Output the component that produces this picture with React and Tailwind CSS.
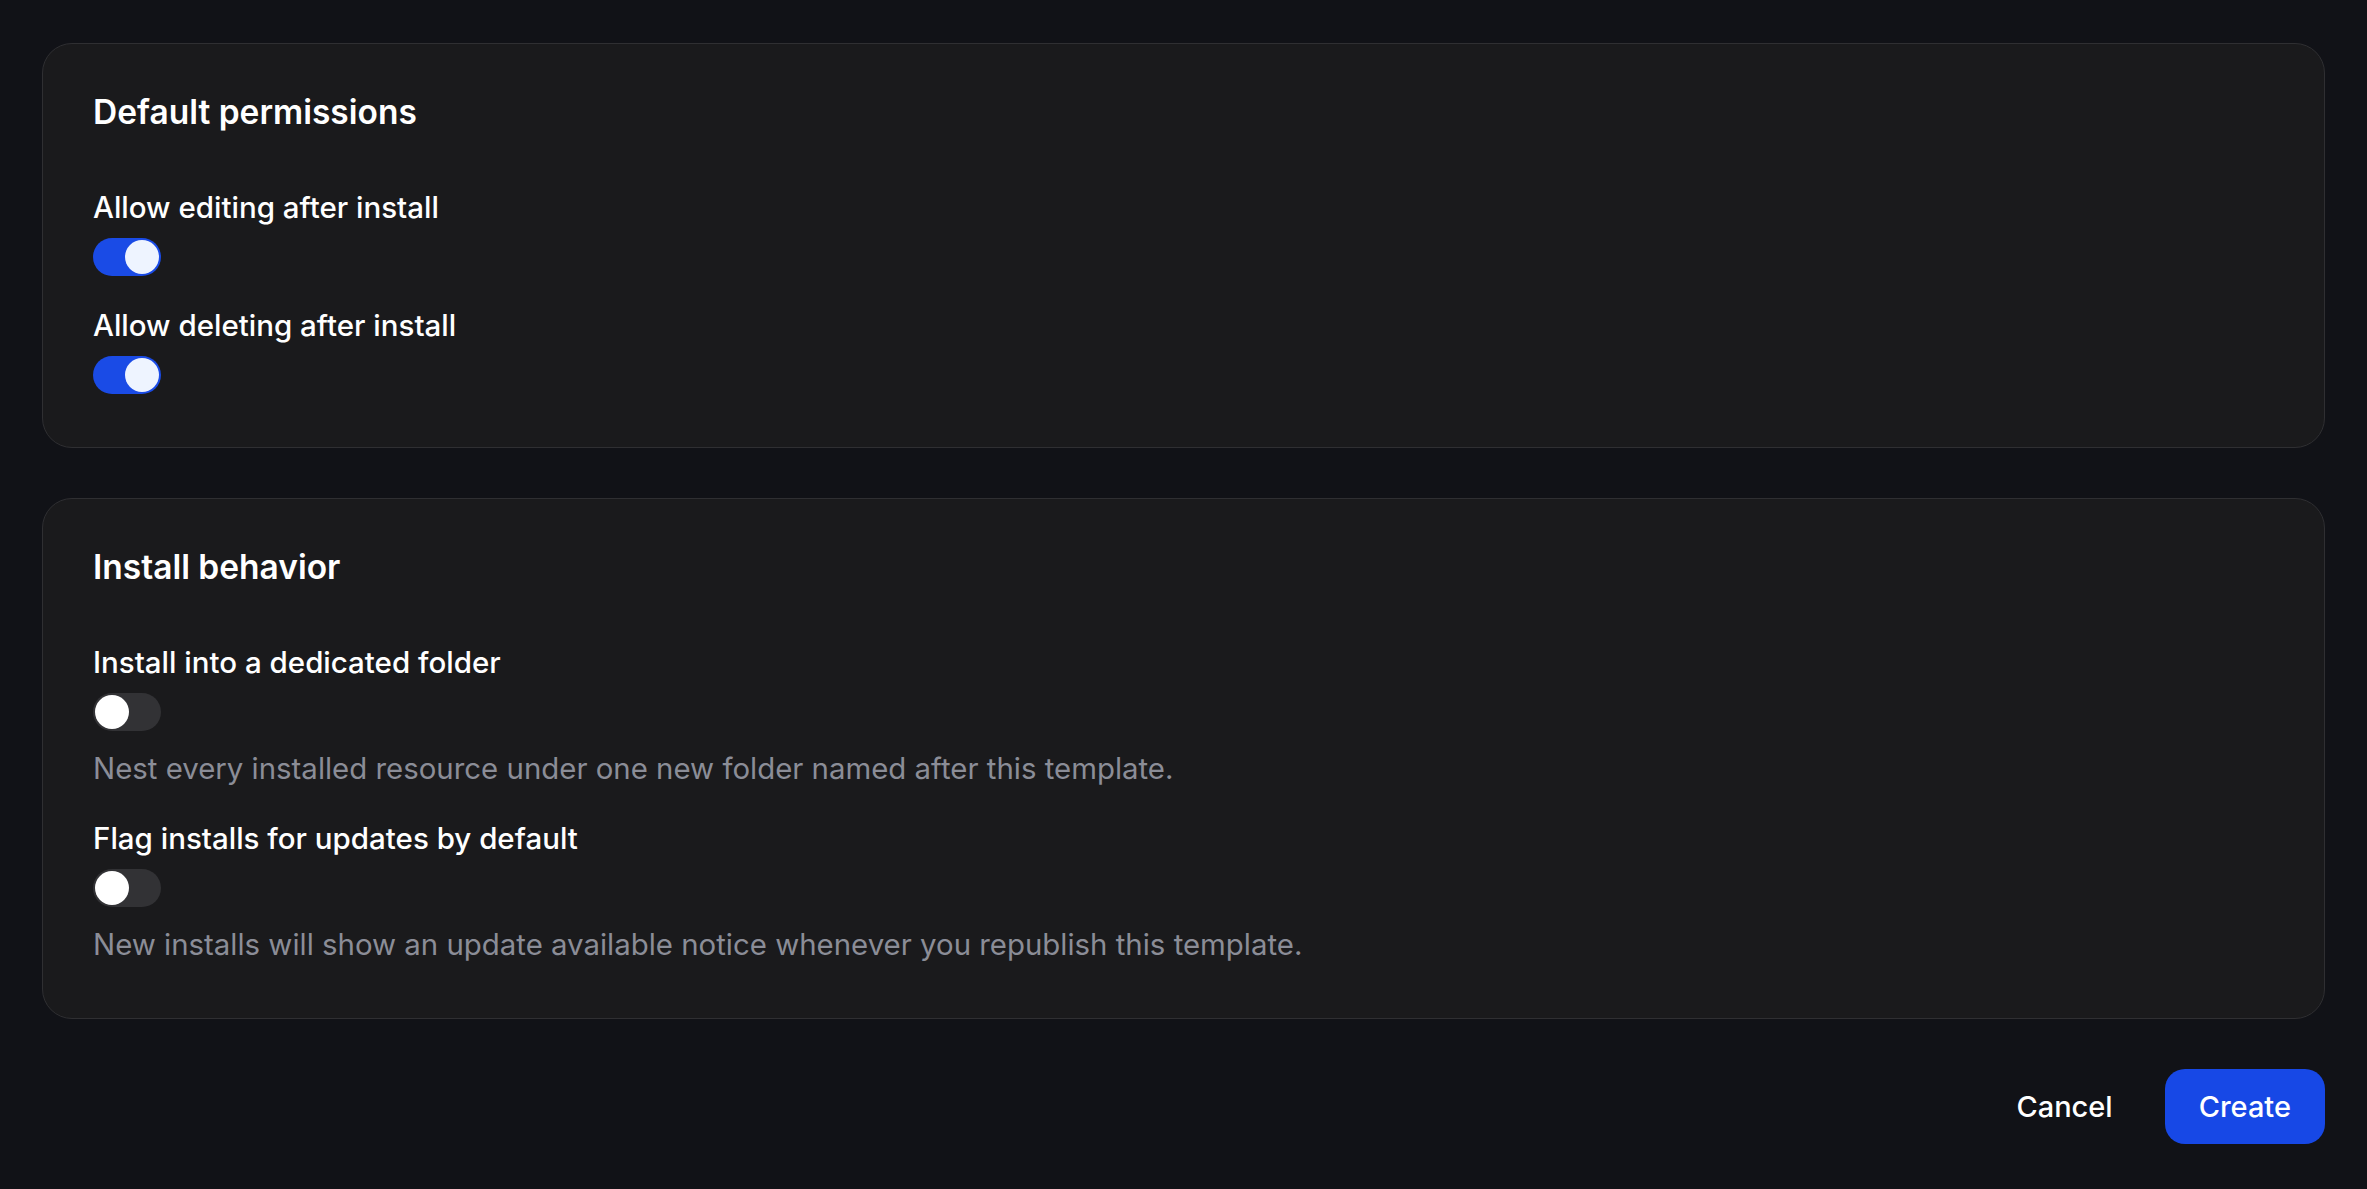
import React from "react";

function Toggle({ on }) {
  return (
    <div
      className={
        "flex h-[38px] w-[68px] shrink-0 items-center rounded-full p-[2px] " +
        (on ? "justify-end bg-[#1a4be6]" : "justify-start bg-[#323235]")
      }
    >
      <div
        className={
          "h-[34px] w-[34px] rounded-full " + (on ? "bg-[#eef4ff]" : "bg-white")
        }
      />
    </div>
  );
}

function Field({ label, on, desc }) {
  return (
    <div className="flex flex-col">
      <div className="text-[29.5px] leading-[36px] font-medium text-white">{label}</div>
      <div className="mt-[13px]">
        <Toggle on={on} />
      </div>
      {desc && (
        <div className="mt-[18px] text-[29.4px] leading-[40px] text-[#8b8d97]">{desc}</div>
      )}
    </div>
  );
}

function Card({ title, children }) {
  return (
    <div className="rounded-[30px] border border-[#2f2f32] bg-[#1a1a1c] px-[50px] pt-[48px] pb-[53px]">
      <div className="text-[33.5px] leading-[40px] font-semibold text-white">{title}</div>
      <div className="mt-[57px] flex flex-col gap-[31px]">{children}</div>
    </div>
  );
}

export default function App() {
  return (
    <div className="min-h-screen bg-[#111217] px-[42px] pt-[43px] pb-[43px] font-['Inter',sans-serif] antialiased">
      <div className="flex flex-col gap-[50px]">
        <Card title="Default permissions">
          <Field label="Allow editing after install" on />
          <Field label="Allow deleting after install" on />
        </Card>
        <Card title="Install behavior">
          <Field
            label="Install into a dedicated folder"
            on={false}
            desc="Nest every installed resource under one new folder named after this template."
          />
          <Field
            label="Flag installs for updates by default"
            on={false}
            desc="New installs will show an update available notice whenever you republish this template."
          />
        </Card>
        <div className="flex items-center justify-end gap-[18px]">
          <button className="h-[75px] rounded-[20px] px-[34px] text-[29px] font-medium text-white">
            Cancel
          </button>
          <button className="h-[75px] rounded-[20px] bg-[#1748e6] px-[34px] text-[29px] font-medium text-white">
            Create
          </button>
        </div>
      </div>
    </div>
  );
}
